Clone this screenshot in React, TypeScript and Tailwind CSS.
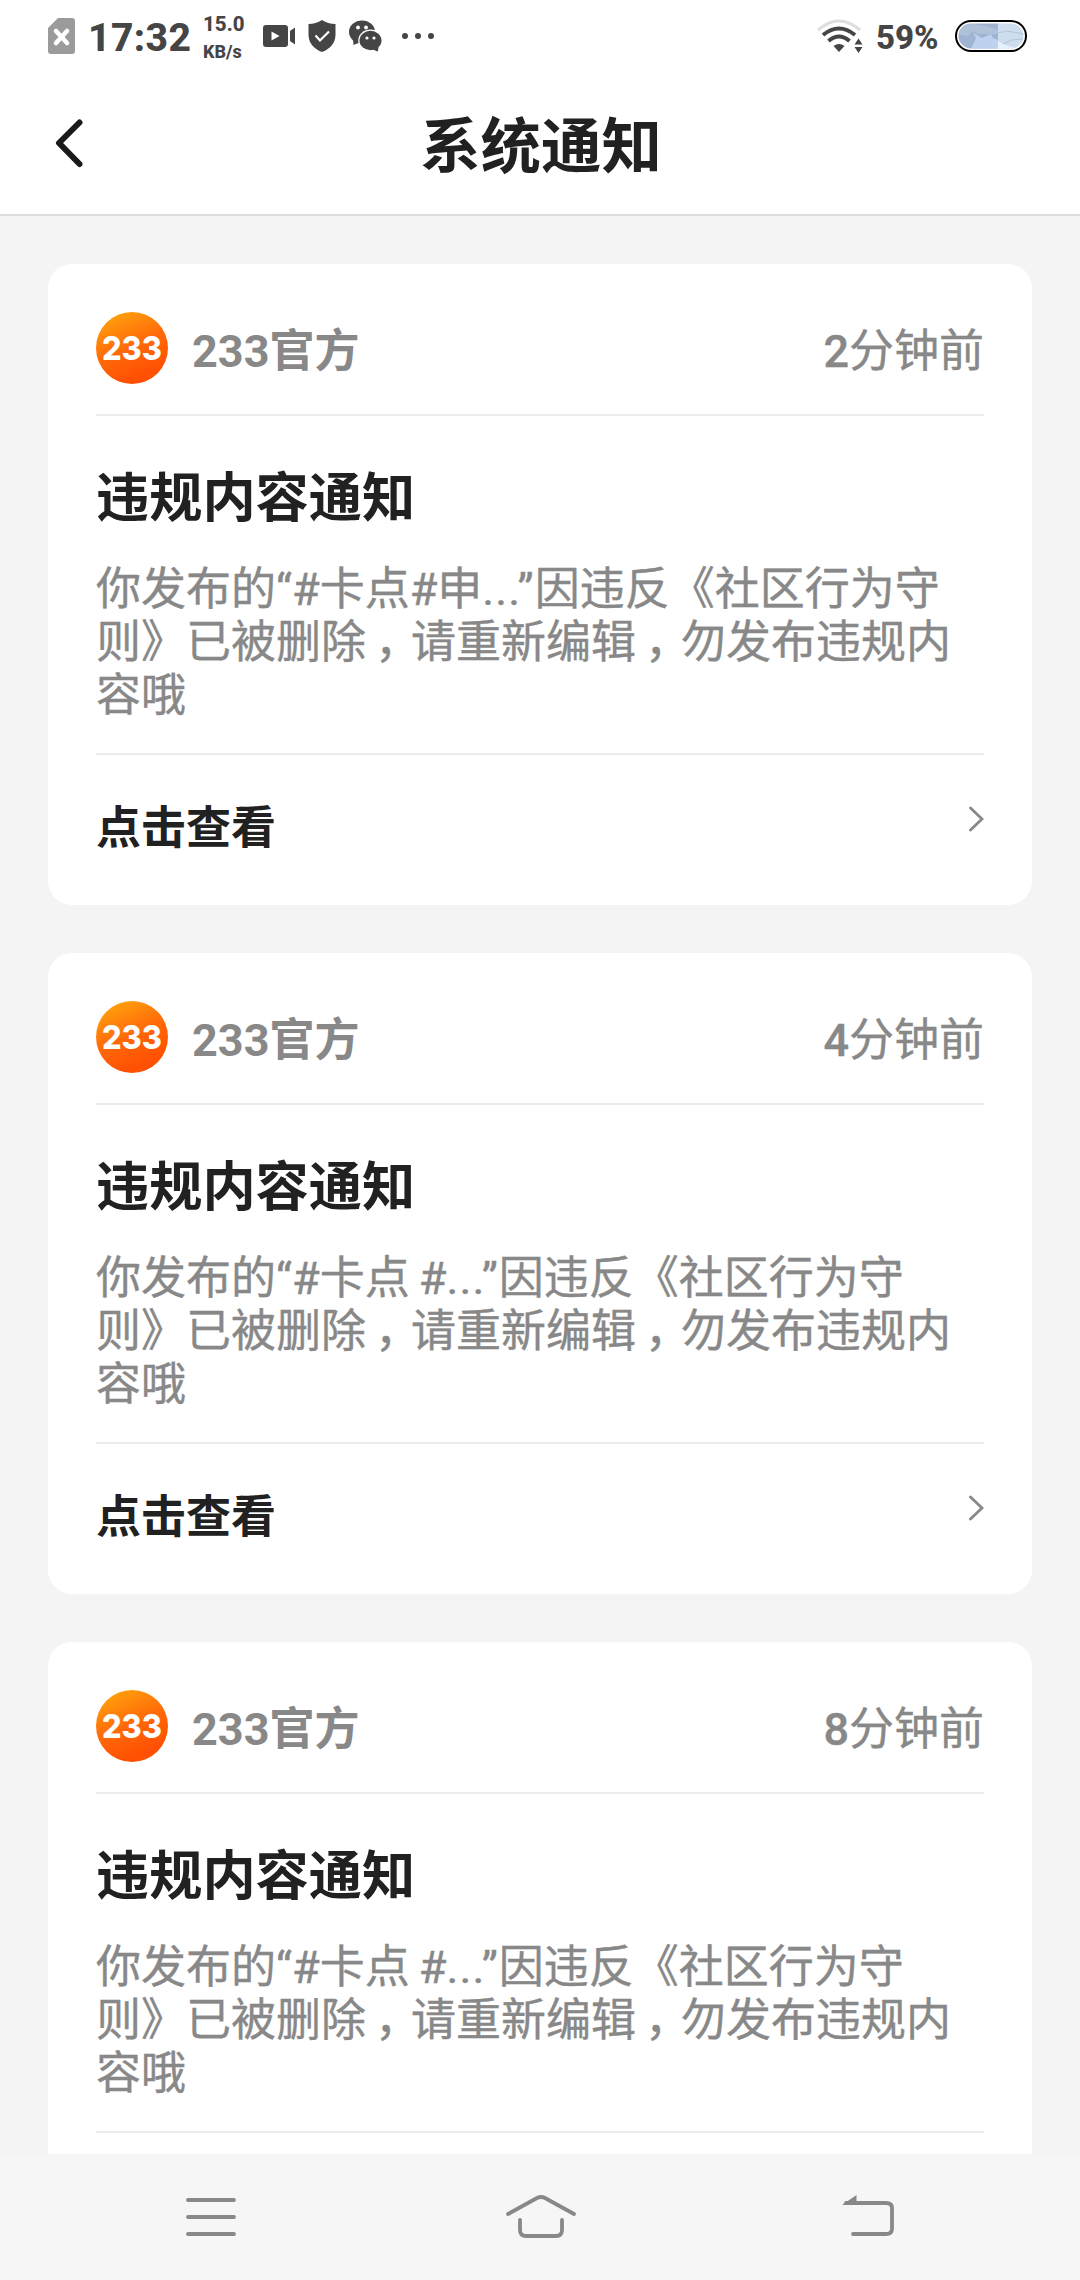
const notices = [
    { id: 1, time: "2", post: "#卡点#申" },
    { id: 2, time: "4", post: "#卡点 #" },
    { id: 3, time: "8", post: "#卡点 #" },
];

function StatusBar() {
    return (
        <div className="flex h-[72px] w-full items-center bg-white text-[#454545]">
            <svg className="ml-12 h-9 w-[27px]" viewBox="0 0 27 36">
                <path d="M10 0H24Q27 0 27 3V33Q27 36 24 36H3Q0 36 0 33V10Z" fill="#9b9b9b" />
                <path d="M8 13L19 25M19 13L8 25" stroke="#fff" strokeWidth="4.5" strokeLinecap="round" />
            </svg>
            <p className="ml-[13px] w-[104px] pt-[3px] text-[39px] font-extrabold leading-[72px] tracking-[0.4px]">17:32</p>
            <div className="ml-[11px] flex h-[50px] w-[56px] flex-col justify-between pt-[3px] font-extrabold">
                <p className="text-[20.5px] leading-[20px]">15.0</p>
                <p className="text-[18px] leading-[18px]">KB/s</p>
            </div>
            <svg className="ml-[4px] h-[22px] w-8" viewBox="0 0 32 22">
                <rect width="25" height="22" rx="3" fill="currentColor" />
                <path d="M8.5 6.5V15.500L16.500 11Z" fill="#fff" />
                <path d="M27 6L32 2.500V19.500L27 16Z" fill="currentColor" />
            </svg>
            <svg className="ml-[13px] h-8 w-[28px]" viewBox="0 0 28 32">
                <path d="M14 0Q20 4 27.500 4V15Q27 27 14 32Q1 27 0.500 15V4Q8 4 14 0Z" fill="currentColor" />
                <path d="M7.500 15.500L12 20.500L21 11.500" fill="none" stroke="#fff" strokeWidth="2.200" />
            </svg>
            {/* two chat bubbles */}
            <svg className="ml-[13px] h-8 w-[33px]" viewBox="0 0 33 32">
                <ellipse cx="13" cy="12" rx="13" ry="11.500" fill="currentColor" />
                <path d="M4 19L4.500 25L12 22Z" fill="currentColor" />
                <circle cx="9" cy="7.500" r="1.900" fill="#fff" />
                <circle cx="17" cy="7.500" r="1.900" fill="#fff" />
                <ellipse cx="21.500" cy="20.500" rx="12.300" ry="11" fill="#fff" />
                <ellipse cx="21.500" cy="20.500" rx="11" ry="9.700" fill="currentColor" />
                <path d="M22 29L29 31.500L29.500 26Z" fill="currentColor" />
                <circle cx="18" cy="18" r="1.600" fill="#fff" />
                <circle cx="25" cy="18" r="1.600" fill="#fff" />
            </svg>
            <svg className="ml-[19px] h-2 w-[34px]" viewBox="0 0 34 8">
                <circle cx="4" cy="4" r="3" fill="currentColor" />
                <circle cx="17" cy="4" r="3" fill="currentColor" />
                <circle cx="30" cy="4" r="3" fill="currentColor" />
            </svg>
            <svg className="ml-auto h-9 w-[46px]" viewBox="0 0 46 36" fill="none">
                <path d="M1 12Q22 -6 43 12" stroke="#dedede" strokeWidth="3" />
                <path d="M6 17Q22 4 38 17" stroke="currentColor" strokeWidth="4" />
                <path d="M11.500 23Q22 14 32.500 23" stroke="currentColor" strokeWidth="4" />
                <path d="M16.500 28Q22 24 27.500 28L22 34Z" fill="currentColor" />
                <path d="M37.500 26.500L41.500 20.500L45.500 26.500ZM37.500 29L41.500 35L45.500 29Z" fill="currentColor" />
            </svg>
            <p className="ml-[13px] w-[65px] pt-[3px] text-[33px] font-extrabold leading-[72px]">59%</p>
            <svg className="ml-[14px] mr-[53px] h-8 w-[72px]" viewBox="0 0 72 32">
                <rect x="1" y="1" width="70" height="30" rx="15" fill="#fff" stroke="#000" strokeWidth="2" />
                <clipPath id="battery">
                    <rect x="3.500" y="3.500" width="65" height="25" rx="12.500" />
                </clipPath>
                <g clipPath="url(#battery)">
                    <rect width="43" height="32" fill="#9fb4d0" />
                    <rect x="43" width="29" height="32" fill="#cfdeee" />
                    <path d="M3 14L12 16L18 11L23 14L43 14V10L30 6L18 4H0Z" fill="#afc2da" />
                    <path d="M16 29L21 18L18 13L27 18L36 14L38 18L43 20V29Z" fill="#bdd2ef" />
                    <path d="M43 13L52 11L69 14M47 24L57 20L69 19" fill="none" stroke="#b5c4d7" />
                    <path d="M43 21L50 25L60 28H43Z" fill="#e7f1fb" />
                </g>
            </svg>
        </div>
    );
}

function Avatar({ id }: { id: number }) {
    return (
        <svg className="h-[72px] w-[72px]" viewBox="0 0 72 72">
            <defs>
                <linearGradient id={`avatar-${id}`} x1="0.2" y1="0" x2="0.6" y2="0.9">
                    <stop offset="0" stopColor="#ffa50e" />
                    <stop offset="0.55" stopColor="#ff6a08" />
                    <stop offset="1" stopColor="#ff5003" />
                </linearGradient>
            </defs>
            <circle cx="36" cy="36" r="36" fill={`url(#avatar-${id})`} />
            <text x="6" y="48" textLength="60" lengthAdjust="spacingAndGlyphs" fill="#fff" className="font-['Inter'] text-[33px] font-extrabold">233</text>
        </svg>
    );
}

// half-width glyph centred in a full-width cell
function Comma() {
    return <span className="inline-block w-[45px] pl-[9px] [font-feature-settings:'halt']">，</span>;
}

function NoticeCard({ id, time, post }: { id: number; time: string; post: string }) {
    return (
        <div className="h-[641px] w-full shrink-0 rounded-[24px] bg-white px-12">
            <div className="flex h-[152px] items-center border-b-2 border-[#ebebeb] pt-[18px]">
                <Avatar id={id} />
                <p className="ml-6 pt-[7px] text-[45px] font-bold leading-[60px] text-[#888]">233官方</p>
                <p className="ml-auto pt-[7px] text-[45px] leading-[60px] text-[#888] [-webkit-text-stroke:0.4px_#888]">
                    <span className="font-medium">{time}</span>分钟前
                </p>
            </div>
            <div className="h-[339px] border-b-2 border-[#ebebeb] pt-[48px]">
                <h2 className="text-[53.2px] font-bold leading-[70px] text-[#212121]">违规内容通知</h2>
                <p className="mt-[29px] whitespace-nowrap text-[45px] leading-[53px] text-[#888] [-webkit-text-stroke:0.4px_#888] [word-spacing:-2px]">
                    你发布的“{post}<span className="tracking-[1.1px]">...”</span>因违反《社区行为守<br />
                    则》已被删除<Comma />请重新编辑<Comma />勿发布违规内<br />
                    容哦
                </p>
            </div>
            <div className="flex justify-between pt-[44px]">
                <p className="text-[45px] font-bold leading-[60px] text-[#212121]">点击查看</p>
                <svg className="mt-[6px] h-[28px] w-[16px]" viewBox="0 0 16 28" fill="none">
                    <path d="M2.500 3L14 14L2.500 25" stroke="#888" strokeWidth="2.800" strokeLinecap="round" />
                </svg>
            </div>
        </div>
    );
}

function NavBar() {
    return (
        <div className="flex h-[126px] w-full shrink-0 items-start justify-between bg-[#f6f6f6] px-[184px] pt-[38px]">
            <svg className="h-12 w-[54px]" viewBox="0 0 54 48" stroke="#888" strokeWidth="3.800" strokeLinecap="round">
                <path d="M4 8H50M4 25H50M4 42H50" />
            </svg>
            <svg className="ml-1 h-12 w-[74px]" viewBox="0 0 74 48" fill="none" stroke="#888" strokeWidth="3.800" strokeLinecap="round">
                <path d="M4 22L33 6Q37 4 41 6L70 22" />
                <path d="M16 28V38Q16 44 22 44H52Q58 44 58 38V28" />
            </svg>
            <svg className="h-12 w-[56px]" viewBox="0 0 56 48" fill="none" stroke="#888" strokeWidth="3.800" strokeLinecap="round">
                <path d="M6 11H46Q52 11 52 16V37Q52 42 46 42H13" />
                <path d="M2 13L16.500 3V13Z" fill="#888" stroke="none" />
            </svg>
        </div>
    );
}

export default function App() {
    return (
        <div className="flex h-[2280px] w-[1080px] flex-col overflow-hidden bg-[#f4f4f4] font-['Roboto','Noto_Sans_CJK_SC',sans-serif]">
            <StatusBar />
            <div className="grid h-36 w-full grid-cols-[1fr_auto_1fr] items-center border-b-2 border-[#dedede] bg-white">
                <svg className="ml-[54px] h-[50px] w-[30px]" viewBox="0 0 30 50" fill="none">
                    <path d="M25.500 4.500L5 25L25.500 46" stroke="#1a1a1a" strokeWidth="6" strokeLinecap="round" strokeLinejoin="round" />
                </svg>
                <h1 className="pl-[2px] pt-[10px] text-[60.4px] font-bold leading-[80px] text-[#212121]">系统通知</h1>
            </div>
            <div className="flex min-h-0 flex-1 flex-col gap-12 overflow-hidden px-12 pt-12">
                {notices.map((notice) => (
                    <NoticeCard key={notice.id} {...notice} />
                ))}
            </div>
            <NavBar />
        </div>
    );
}
